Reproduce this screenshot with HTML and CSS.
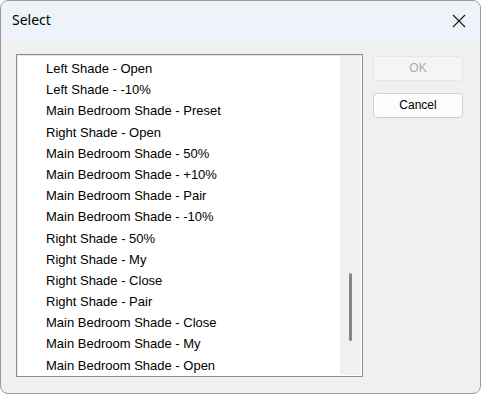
FILE: index.html
```html
<!DOCTYPE html>
<html lang="en">
<head>
  <meta charset="UTF-8" />
  <title>Select</title>
  <link rel="stylesheet" href="styles.css">
</head>
<body>
  <div class="window">
    <div class="titlebar">
      <span class="title">Select</span>
      <svg class="close" width="14" height="14" viewBox="0 0 14 14">
        <path d="M1 1 L13 13 M13 1 L1 13" stroke="#1a1a1a" stroke-width="1.2" fill="none" />
      </svg>
    </div>

    <div class="content">
      <div class="listbox">
        <ul class="items">
          <li>Left Shade - Open</li>
          <li>Left Shade - -10%</li>
          <li>Main Bedroom Shade - Preset</li>
          <li>Right Shade - Open</li>
          <li>Main Bedroom Shade - 50%</li>
          <li>Main Bedroom Shade - +10%</li>
          <li>Main Bedroom Shade - Pair</li>
          <li>Main Bedroom Shade - -10%</li>
          <li>Right Shade - 50%</li>
          <li>Right Shade - My</li>
          <li>Right Shade - Close</li>
          <li>Right Shade - Pair</li>
          <li>Main Bedroom Shade - Close</li>
          <li>Main Bedroom Shade - My</li>
          <li>Main Bedroom Shade - Open</li>
        </ul>
        <div class="scrollbar">
          <div class="thumb"></div>
        </div>
      </div>

      <div class="buttons">
        <button class="btn" disabled>OK</button>
        <button class="btn">Cancel</button>
      </div>
    </div>
  </div>
</body>
</html>
```

FILE: styles.css
```css
html, body {
  margin: 0;
  padding: 0;
  background: #fff;
}

.window {
  width: 481px;
  height: 394px;
  box-sizing: border-box;
  border: 1px solid #9a9a9a;
  border-radius: 8px;
  background: #f0f0f0;
  overflow: hidden;
  display: flex;
  flex-direction: column;
  font-family: "Liberation Sans", Arial, sans-serif;
  color: #000;
}

.titlebar {
  height: 38px;
  flex-shrink: 0;
  background: #eef3fa;
  display: flex;
  align-items: center;
  justify-content: space-between;
  padding: 0 14px 0 11px;
}

.title {
  font-family: "Noto Sans", sans-serif;
  font-size: 14px;
  margin-top: -2px;
}

.close {
  margin-top: 1px;
}

.content {
  display: flex;
  align-items: flex-start;
  padding: 15px 0 0 15px;
}

.listbox {
  width: 347px;
  height: 323px;
  box-sizing: border-box;
  border: 1px solid #8c8c8c;
  box-shadow: inset 1px 1px 0 #e8e8e8;
  background: #fff;
  display: flex;
  overflow: hidden;
}

.items {
  list-style: none;
  margin: 0;
  padding: 3px 0 0 29px;
  flex: 1;
  font-size: 13px;
}

.items li {
  height: 21.2px;
  line-height: 21.2px;
  white-space: nowrap;
}

.scrollbar {
  width: 21px;
  margin: 1px 1px 1px 0;
  background: #f0f0f0;
  display: flex;
  justify-content: center;
}

.thumb {
  width: 3px;
  height: 68px;
  margin-top: 217px;
  border-radius: 2px;
  background: #858585;
}

.buttons {
  display: flex;
  flex-direction: column;
  gap: 12px;
  margin-left: 10px;
  margin-top: 2px;
}

.btn {
  width: 90px;
  height: 25px;
  box-sizing: border-box;
  border: 1px solid #d0d0d0;
  border-radius: 4px;
  background: #fdfdfd;
  font-family: "Liberation Sans", Arial, sans-serif;
  font-size: 12px;
  color: #000;
  padding: 0 0 2px;
}

.btn:disabled {
  background: #f5f5f5;
  border-color: #e6e6e6;
  color: #a8a8a8;
}
```
